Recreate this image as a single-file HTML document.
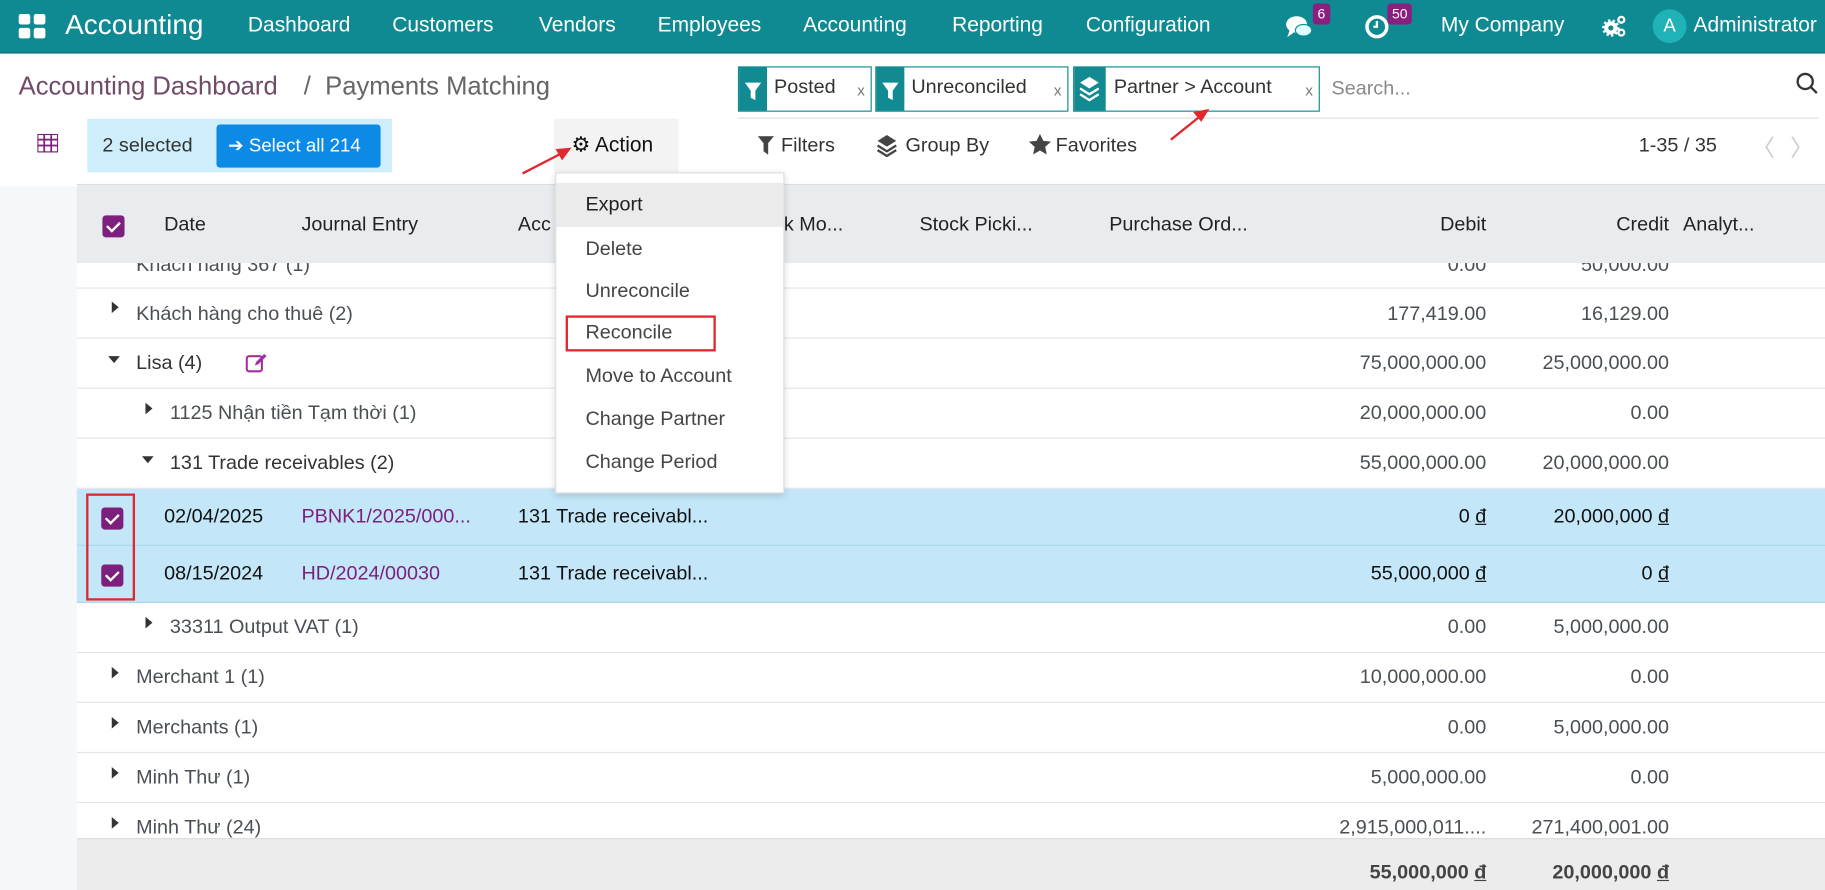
<!DOCTYPE html>
<html><head><meta charset="utf-8">
<style>
*{box-sizing:border-box;margin:0;padding:0}
html,body{width:1825px;height:890px;overflow:hidden;background:#fff}
#w{position:absolute;left:0;top:0;width:1568px;height:765px;transform:scale(1.16390);transform-origin:0 0;font-family:"Liberation Sans","Noto Sans CJK SC",sans-serif;color:#4a4f55;font-size:17px}
.a{position:absolute;white-space:nowrap}
.nav{left:0;top:0;width:1568px;height:46px;background:#0f8a92;border-bottom:1px solid #0a6d73}
.nav .a{color:#fff;top:11px;font-size:18px}
.badge{background:#8b1f7f;color:#fff;font-size:12px!important;border-radius:3px;padding:2px 4px;top:3px!important}
.facet{top:57px;height:39px;border:1px solid #128a92;background:#fff}
.facet .ic{position:absolute;left:0;top:0;width:24px;height:100%;background:#128a92}
.facet span{position:absolute;left:30px;top:7px;color:#333;font-size:17px}
.facet i{position:absolute;right:5px;top:12px;font-style:normal;color:#777;font-size:13px}
.row{position:absolute;left:66px;width:1502px;border-bottom:1px solid #e3e5e8}
.r{position:absolute;text-align:right}
.tr{position:absolute;width:0;height:0;border-top:5px solid transparent;border-bottom:5px solid transparent;border-left:6px solid #333}
.td{position:absolute;width:0;height:0;border-left:5px solid transparent;border-right:5px solid transparent;border-top:6px solid #333}
.cb{position:absolute;width:19px;height:19px;background:#7d1f7c;border-radius:3px}
.cb:after{content:"";position:absolute;left:6px;top:3px;width:5px;height:9px;border:solid #fff;border-width:0 2px 2px 0;transform:rotate(45deg)}
.dd{left:477px;top:148px;width:197px;height:276px;background:#fff;border:1px solid #ddd;box-shadow:0 2px 6px rgba(0,0,0,.15)}
.dd div{position:absolute;left:25px;color:#444;font-size:17px}
u{text-decoration:underline}
</style></head><body><div id="w">
<div class="a nav">
 <svg class="a" style="left:16px;top:12px" width="24" height="22" viewBox="0 0 24 22"><rect x="0" y="0" width="10" height="9" rx="2" fill="#fff"/><rect x="13" y="0" width="10" height="9" rx="2" fill="#fff"/><rect x="0" y="12" width="10" height="9" rx="2" fill="#fff"/><rect x="13" y="12" width="10" height="9" rx="2" fill="#fff"/></svg>
 <div class="a" style="left:56px;top:8px;font-size:24px">Accounting</div>
 <div class="a" style="left:213px">Dashboard</div>
 <div class="a" style="left:337px">Customers</div>
 <div class="a" style="left:463px">Vendors</div>
 <div class="a" style="left:565px">Employees</div>
 <div class="a" style="left:690px">Accounting</div>
 <div class="a" style="left:818px">Reporting</div>
 <div class="a" style="left:933px">Configuration</div>
 <svg class="a" style="left:1104px;top:12px" width="26" height="24" viewBox="0 0 26 24"><ellipse cx="10" cy="9" rx="9" ry="7" fill="#fff"/><path d="M4 14 L2 20 L9 15Z" fill="#fff"/><ellipse cx="16" cy="14" rx="7" ry="5" fill="#dff" stroke="#0f8a92" stroke-width="1"/></svg>
 <div class="a badge" style="left:1128px">6</div>
 <svg class="a" style="left:1172px;top:12px" width="22" height="22" viewBox="0 0 22 22"><circle cx="11" cy="11" r="8.5" fill="none" stroke="#fff" stroke-width="3"/><path d="M11 6v5h-3" stroke="#fff" stroke-width="2" fill="none"/></svg>
 <div class="a badge" style="left:1192px">50</div>
 <div class="a" style="left:1238px">My Company</div>
 <svg class="a" style="left:1376px;top:12px" width="22" height="22" viewBox="0 0 22 22"><circle cx="8" cy="12" r="4" fill="none" stroke="#fff" stroke-width="3.5"/><circle cx="8" cy="12" r="6.5" fill="none" stroke="#fff" stroke-width="2" stroke-dasharray="2 2"/><circle cx="17" cy="5" r="2.5" fill="none" stroke="#fff" stroke-width="2"/><circle cx="17" cy="16" r="2.5" fill="none" stroke="#fff" stroke-width="2"/></svg>
 <div class="a" style="left:1420px;top:8px;width:29px;height:29px;border-radius:50%;background:#1fb3b8;text-align:center;line-height:29px;font-size:16px">A</div>
 <div class="a" style="left:1455px">Administrator</div>
</div>
<div class="a" style="left:16px;top:61px;font-size:22px;color:#714b67">Accounting Dashboard</div>
<div class="a" style="left:261px;top:61px;font-size:22px;color:#666">/ &nbsp;Payments Matching</div>
<div class="a facet" style="left:634px;width:115px"><div class="ic"><svg width="24" height="37" viewBox="0 0 24 37"><path d="M5 13h14l-5 7v8l-4-2v-6z" fill="#fff"/></svg></div><span>Posted</span><i>x</i></div>
<div class="a facet" style="left:752px;width:166px"><div class="ic"><svg width="24" height="37" viewBox="0 0 24 37"><path d="M5 13h14l-5 7v8l-4-2v-6z" fill="#fff"/></svg></div><span>Unreconciled</span><i>x</i></div>
<div class="a facet" style="left:922px;width:212px"><div class="ic" style="width:27px"><svg width="27" height="37" viewBox="0 0 27 37"><path d="M13 8l8 5-8 5-8-5z" fill="#fff"/><path d="M5 18l8 5 8-5M5 23l8 5 8-5" stroke="#fff" stroke-width="2" fill="none"/></svg></div><span style="left:34px">Partner &gt; Account</span><i>x</i></div>
<div class="a" style="left:1144px;top:66px;color:#888;font-size:17px">Search...</div>
<svg class="a" style="left:1543px;top:62px" width="20" height="20" viewBox="0 0 20 20"><circle cx="8" cy="8" r="6.5" fill="none" stroke="#333" stroke-width="2"/><path d="M13 13l5 5" stroke="#333" stroke-width="2"/></svg>
<div class="a" style="left:634px;top:101px;width:928px;height:1px;background:#ddd"></div>
<svg class="a" style="left:32px;top:115px" width="18" height="16" viewBox="0 0 18 16"><rect x="0.5" y="0.5" width="17" height="15" fill="none" stroke="#7d1f7c"/><path d="M0 5h18M0 10h18M6 0v16M12 0v16" stroke="#7d1f7c" stroke-width="1.5"/></svg>
<div class="a" style="left:75px;top:102px;width:262px;height:46px;background:#cdeefa"></div>
<div class="a" style="left:88px;top:115px;color:#333">2 selected</div>
<div class="a" style="left:186px;top:107px;width:141px;height:37px;background:#0d8ae6;border-radius:3px;color:#fff;font-size:16px;line-height:37px;padding-left:10px">➔ Select all 214</div>
<div class="a" style="left:476px;top:102px;width:107px;height:46px;background:#f3f3f3"></div>
<div class="a" style="left:491px;top:114px;color:#111;font-size:18px">⚙ Action</div>
<svg class="a" style="left:651px;top:117px" width="14" height="16" viewBox="0 0 14 16"><path d="M0 0h14l-5 6v10l-4-3V6z" fill="#444"/></svg>
<div class="a" style="left:671px;top:115px;color:#333">Filters</div>
<svg class="a" style="left:752px;top:115px" width="20" height="20" viewBox="0 0 20 20"><path d="M10 1l8 5-8 5-8-5z" fill="#444"/><path d="M2 10l8 5 8-5M2 14l8 5 8-5" stroke="#444" stroke-width="2" fill="none"/></svg>
<div class="a" style="left:778px;top:115px;color:#333">Group By</div>
<svg class="a" style="left:884px;top:115px" width="19" height="18" viewBox="0 0 19 18"><path d="M9.5 0l2.9 6 6.6.7-5 4.5 1.4 6.5-5.9-3.4-5.9 3.4 1.4-6.5-5-4.5 6.6-.7z" fill="#444"/></svg>
<div class="a" style="left:907px;top:115px;color:#333">Favorites</div>
<div class="a" style="left:1408px;top:115px;color:#333">1-35 / 35</div>
<div class="a" style="left:1505px;top:111px;color:#ccc;font-size:20px">〈</div>
<div class="a" style="left:1538px;top:111px;color:#ccc;font-size:20px">〉</div>
<div class="a" style="left:0;top:160px;width:66px;height:605px;background:#f6f7f9"></div>
<div class="a" style="left:66px;top:158px;width:1502px;height:1px;background:#dcdcdc"></div>
<div class="row" style="top:206px;height:42px"><div class="a" style="left:51px;top:12px">Khách hàng 367 (1)</div><div class="r" style="right:291px;top:12px">0.00</div><div class="r" style="right:134px;top:12px">50,000.00</div></div>
<div class="a" style="left:66px;top:159px;width:1502px;height:67px;background:#e9ecef;color:#222"><div class="cb" style="left:22px;top:26px"></div><div class="a" style="left:75px;top:24px">Date</div><div class="a" style="left:193px;top:24px">Journal Entry</div><div class="a" style="left:379px;top:24px">Acc</div><div class="a" style="left:599px;top:24px">ck Mo...</div><div class="a" style="left:724px;top:24px">Stock Picki...</div><div class="a" style="left:887px;top:24px">Purchase Ord...</div><div class="r" style="right:291px;top:24px">Debit</div><div class="r" style="right:134px;top:24px">Credit</div><div class="a" style="left:1380px;top:24px">Analyt...</div></div>
<div class="row" style="top:248px;height:43px"><div class="tr" style="left:30px;top:11px"></div><div class="a" style="left:51px;top:12px">Khách hàng cho thuê (2)</div><div class="r" style="right:291px;top:12px">177,419.00</div><div class="r" style="right:134px;top:12px">16,129.00</div></div>
<div class="row" style="top:291px;height:43px"><div class="td" style="left:27px;top:15px"></div><div class="a" style="left:51px;top:11px;color:#333">Lisa (4)</div><svg class="a" style="left:145px;top:12px" width="20" height="18" viewBox="0 0 20 18"><rect x="1" y="3" width="13" height="13" rx="2" fill="none" stroke="#a1309e" stroke-width="1.8"/><path d="M8 11l1-3 7-7 2 2-7 7z" fill="#a1309e"/></svg><div class="r" style="right:291px;top:11px">75,000,000.00</div><div class="r" style="right:134px;top:11px">25,000,000.00</div></div>
<div class="row" style="top:334px;height:43px"><div class="tr" style="left:59px;top:12px"></div><div class="a" style="left:80px;top:11px">1125 Nhận tiền Tạm thời (1)</div><div class="r" style="right:291px;top:11px">20,000,000.00</div><div class="r" style="right:134px;top:11px">0.00</div></div>
<div class="row" style="top:377px;height:43px"><div class="td" style="left:56px;top:15px"></div><div class="a" style="left:80px;top:11px;color:#333">131 Trade receivables (2)</div><div class="r" style="right:291px;top:11px">55,000,000.00</div><div class="r" style="right:134px;top:11px">20,000,000.00</div></div>
<div class="row" style="top:420px;height:49px;background:#c3e7f8;border-color:#a7d4ea;color:#111"><div class="cb" style="left:21px;top:16px"></div><div class="a" style="left:75px;top:14px">02/04/2025</div><div class="a" style="left:193px;top:14px;color:#7d1f7c">PBNK1/2025/000...</div><div class="a" style="left:379px;top:14px">131 Trade receivabl...</div><div class="r" style="right:291px;top:14px">0 <u>đ</u></div><div class="r" style="right:134px;top:14px">20,000,000 <u>đ</u></div></div>
<div class="row" style="top:469px;height:49px;background:#c3e7f8;border-color:#a7d4ea;color:#111"><div class="cb" style="left:21px;top:16px"></div><div class="a" style="left:75px;top:14px">08/15/2024</div><div class="a" style="left:193px;top:14px;color:#7d1f7c">HD/2024/00030</div><div class="a" style="left:379px;top:14px">131 Trade receivabl...</div><div class="r" style="right:291px;top:14px">55,000,000 <u>đ</u></div><div class="r" style="right:134px;top:14px">0 <u>đ</u></div></div>
<div class="row" style="top:518px;height:43px"><div class="tr" style="left:59px;top:12px"></div><div class="a" style="left:80px;top:11px">33311 Output VAT (1)</div><div class="r" style="right:291px;top:11px">0.00</div><div class="r" style="right:134px;top:11px">5,000,000.00</div></div>
<div class="row" style="top:561px;height:43px"><div class="tr" style="left:30px;top:12px"></div><div class="a" style="left:51px;top:11px">Merchant 1 (1)</div><div class="r" style="right:291px;top:11px">10,000,000.00</div><div class="r" style="right:134px;top:11px">0.00</div></div>
<div class="row" style="top:604px;height:43px"><div class="tr" style="left:30px;top:12px"></div><div class="a" style="left:51px;top:11px">Merchants (1)</div><div class="r" style="right:291px;top:11px">0.00</div><div class="r" style="right:134px;top:11px">5,000,000.00</div></div>
<div class="row" style="top:647px;height:43px"><div class="tr" style="left:30px;top:12px"></div><div class="a" style="left:51px;top:11px">Minh Thư (1)</div><div class="r" style="right:291px;top:11px">5,000,000.00</div><div class="r" style="right:134px;top:11px">0.00</div></div>
<div class="row" style="top:690px;height:30px;border:none;overflow:hidden"><div class="tr" style="left:30px;top:12px"></div><div class="a" style="left:51px;top:11px">Minh Thư (24)</div><div class="r" style="right:291px;top:11px">2,915,000,011....</div><div class="r" style="right:134px;top:11px">271,400,001.00</div></div>
<div class="a" style="left:66px;top:720px;width:1502px;height:45px;background:#ececec;border-top:1px solid #ddd;font-weight:bold;color:#444"><div class="r" style="right:291px;top:19px">55,000,000 <u>đ</u></div><div class="r" style="right:134px;top:19px">20,000,000 <u>đ</u></div></div>
<div class="a" style="left:74px;top:424px;width:42px;height:92px;border:2px solid #e0282e"></div>
<div class="a dd">
 <div style="left:0;top:8px;width:195px;height:38px;background:#ebebeb"></div>
 <div style="top:17px;color:#222">Export</div>
 <div style="top:55px">Delete</div>
 <div style="top:91px">Unreconcile</div>
 <div style="top:127px">Reconcile</div>
 <div style="left:8px;top:122px;width:129px;height:31px;border:2px solid #e0282e"></div>
 <div style="top:164px">Move to Account</div>
 <div style="top:201px">Change Partner</div>
 <div style="top:238px">Change Period</div>
</div>
<svg class="a" style="left:0;top:0" width="1568" height="765"><g stroke="#e0282e" stroke-width="2" fill="#e0282e"><path d="M449 149L482 132"/><path d="M489 128L479 129L483 136Z"/><path d="M1006 120L1031 100"/><path d="M1037 95L1027 97L1032 103Z"/></g></svg>
</div></body></html>
